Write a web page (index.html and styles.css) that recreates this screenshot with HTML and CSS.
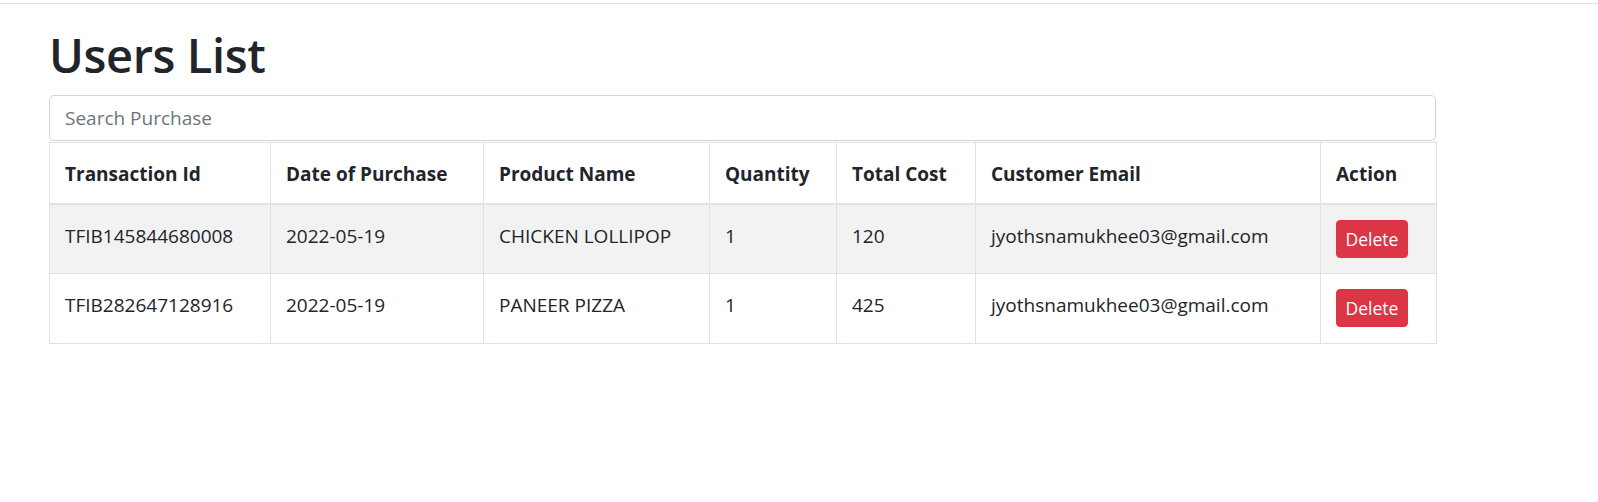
FILE: index.html
```html
<!DOCTYPE html>
<html lang="en">
<head>
<meta charset="utf-8">
<title>Users List</title>
<link rel="stylesheet" href="styles.css">
</head>
<body>
<div class="topbar"></div>
<main class="page">
  <h1 class="title">Users List</h1>
  <input class="search" type="text" placeholder="Search Purchase">
  <table class="grid">
    <colgroup>
      <col class="c1"><col class="c2"><col class="c3"><col class="c4"><col class="c5"><col class="c6"><col class="c7">
    </colgroup>
    <thead>
      <tr class="head-row">
        <th>Transaction Id</th>
        <th>Date of Purchase</th>
        <th>Product Name</th>
        <th>Quantity</th>
        <th>Total Cost</th>
        <th>Customer Email</th>
        <th>Action</th>
      </tr>
    </thead>
    <tbody>
      <tr class="body-row odd">
        <td>TFIB145844680008</td>
        <td>2022-05-19</td>
        <td>CHICKEN LOLLIPOP</td>
        <td>1</td>
        <td>120</td>
        <td>jyothsnamukhee03@gmail.com</td>
        <td class="action"><button class="btn-delete" type="button">Delete</button></td>
      </tr>
      <tr class="body-row">
        <td>TFIB282647128916</td>
        <td>2022-05-19</td>
        <td>PANEER PIZZA</td>
        <td>1</td>
        <td>425</td>
        <td>jyothsnamukhee03@gmail.com</td>
        <td class="action"><button class="btn-delete" type="button">Delete</button></td>
      </tr>
    </tbody>
  </table>
</main>
</body>
</html>
```
FILE: styles.css
```css
html, body {
  margin: 0;
  padding: 0;
  background: #ffffff;
}

body {
  font-family: "Open Sans", "Noto Sans", "Liberation Sans", sans-serif;
  font-size: 19px;
  line-height: 30px;
  color: #212529;
}

.topbar {
  height: 3px;
  border-bottom: 1px solid #e3e3e3;
}

.page {
  width: 1387px;
  margin-left: 49px;
  padding-top: 21px;
}

.title {
  margin: 0 0 10px 0;
  font-size: 47px;
  line-height: 60px;
  font-weight: 600;
  color: #212529;
  letter-spacing: -0.4px;
}

.search {
  display: block;
  box-sizing: border-box;
  width: 100%;
  height: 46px;
  margin: 0;
  padding: 7px 15px;
  font-family: inherit;
  font-size: 19px;
  line-height: 30px;
  color: #495057;
  background: #fff;
  border: 1px solid #ced4da;
  border-radius: 5px;
  outline: none;
}

.search::placeholder {
  color: #6c757d;
}

.grid {
  width: 1387px;
  margin-top: 1px;
  border-collapse: collapse;
  table-layout: fixed;
}

.c1 { width: 221px; }
.c2 { width: 213px; }
.c3 { width: 226px; }
.c4 { width: 127px; }
.c5 { width: 139px; }
.c6 { width: 345px; }
.c7 { width: 116px; }

.grid th,
.grid td {
  border: 1px solid #dee2e6;
  text-align: left;
  vertical-align: top;
  white-space: nowrap;
}

.head-row {
  height: 61px;
}

.body-row {
  height: 70px;
}

.grid th {
  padding: 16px 15px 0 15px;
  font-weight: 700;
  border-bottom: 2px solid #dee2e6;
}

.grid td {
  padding: 16px 15px 0 15px;
}

.grid td.action {
  padding-top: 15px;
}

.grid tr.odd td {
  background: #f2f2f2;
}

.btn-delete {
  display: block;
  box-sizing: border-box;
  height: 38px;
  width: 72px;
  padding: 0 8px;
  margin: 0;
  font-family: inherit;
  font-size: 17.5px;
  line-height: 36px;
  color: #fff;
  background: #dc3545;
  border: 1px solid #dc3545;
  border-radius: 4px;
}
```
